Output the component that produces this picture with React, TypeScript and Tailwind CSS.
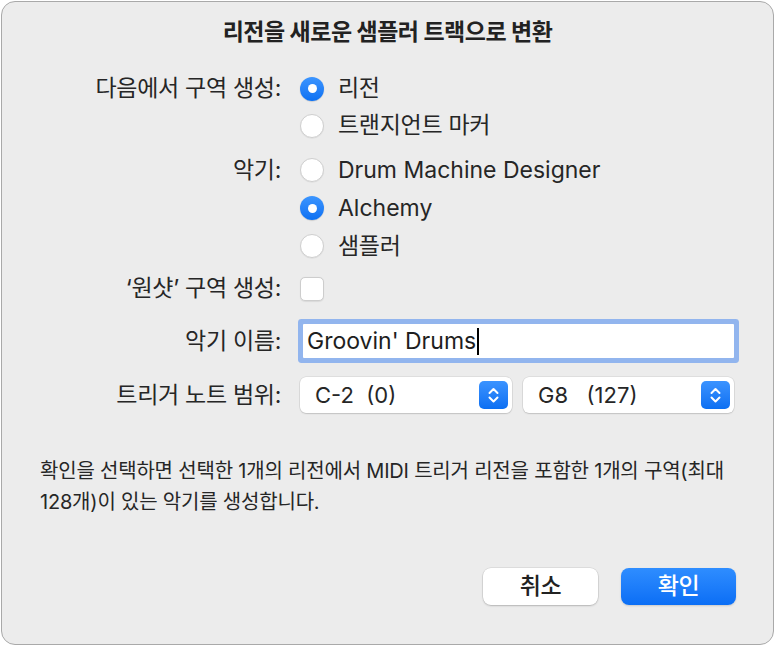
import React from "react";

const Radio = ({ on }: { on?: boolean }) =>
  on ? (
    <span className="flex h-6 w-6 shrink-0 items-center justify-center rounded-full bg-linear-to-b from-[#3b95ff] to-[#0a70f2] shadow-[0_0.5px_1px_rgba(0,0,0,0.25)]">
      <span className="h-[9px] w-[9px] rounded-full bg-white" />
    </span>
  ) : (
    <span className="h-6 w-6 shrink-0 rounded-full border border-[#cfcfcf] bg-white shadow-[0_0.5px_1px_rgba(0,0,0,0.08)]" />
  );

const Row = ({
  label,
  className = "h-[37px]",
  children,
}: {
  label?: string;
  className?: string;
  children: React.ReactNode;
}) => (
  <div className={`flex items-center ${className}`}>
    <div className="w-[279px] text-right text-[23px] tracking-[-0.3px] text-[#262626]">
      {label}
    </div>
    <div className="ml-[19px] flex flex-1 items-center">{children}</div>
  </div>
);

const Option = ({ on, children, latin }: { on?: boolean; children: React.ReactNode; latin?: boolean }) => (
  <div className="flex items-center gap-[14px]">
    <Radio on={on} />
    <span
      className={
        latin
          ? "text-[23px] text-[#262626]"
          : "text-[23px] tracking-[-0.3px] text-[#262626]"
      }
    >
      {children}
    </span>
  </div>
);

const Stepper = () => (
  <span className="flex h-[28px] w-[29px] items-center justify-center rounded-[5px] bg-linear-to-b from-[#3a93ff] to-[#0a6ff2]">
    <svg width="29" height="28" viewBox="0 0 29 28" fill="none">
      <path d="M10.5 12 L14.5 8 L18.5 12" stroke="white" strokeWidth="2" strokeLinecap="round" strokeLinejoin="round" />
      <path d="M10.5 16.5 L14.5 20.5 L18.5 16.5" stroke="white" strokeWidth="2" strokeLinecap="round" strokeLinejoin="round" />
    </svg>
  </span>
);

const Popup = ({ value, className }: { value: string; className: string }) => (
  <div
    className={`flex h-[36px] items-center justify-between rounded-[6px] bg-white pl-[15px] pr-[4px] shadow-[0_0_0_0.5px_rgba(0,0,0,0.12),0_1px_1.5px_rgba(0,0,0,0.12)] ${className}`}
  >
    <span className="whitespace-pre text-[22px] text-[#262626]">{value}</span>
    <Stepper />
  </div>
);

export default function App() {
  return (
    <div className="h-[646px] w-[779px] bg-white p-[1px] font-['Inter','Noto_Sans_CJK_KR',sans-serif]">
      <div className="flex h-[644px] w-[773px] flex-col rounded-[14px] border border-[#a9a9a9] bg-[#ececec]">
        <h1 className="pt-[15px] text-center text-[23px] leading-[30px] font-bold tracking-[-0.5px] text-[#222]">
          리전을 새로운 샘플러 트랙으로 변환
        </h1>

        <div className="mt-[23px] flex flex-col">
          <Row label="다음에서 구역 생성:">
            <Option on>리전</Option>
          </Row>
          <Row>
            <Option>트랜지언트 마커</Option>
          </Row>

          <Row label="악기:" className="mt-[7px] h-[38px]">
            <Option latin>Drum Machine Designer</Option>
          </Row>
          <Row className="h-[38px]">
            <Option on latin>
              Alchemy
            </Option>
          </Row>
          <Row className="h-[38px]">
            <Option>샘플러</Option>
          </Row>

          <Row label="‘원샷’ 구역 생성:" className="mt-[5px] h-[37px]">
            <span className="h-6 w-6 rounded-[5px] border border-[#cdcdcd] bg-white shadow-[0_0.5px_1px_rgba(0,0,0,0.08)]" />
          </Row>

          <Row label="악기 이름:" className="mt-[11px] h-[46px]">
            <div className="ml-[3px] flex h-[34px] w-[431px] items-center rounded-[1px] bg-white pl-[4px] shadow-[0_0_0_5px_#92b5ee]">
              <span className="text-[23px] text-[#1e1e1e]">Groovin' Drums</span>
              <span className="ml-[1px] h-[27px] w-[2px] bg-black" />
            </div>
          </Row>

          <Row label="트리거 노트 범위:" className="mt-[13px] h-[36px]">
            <Popup value="C-2  (0)" className="w-[212px]" />
            <Popup value="G8   (127)" className="ml-[11px] w-[211px]" />
          </Row>
        </div>

        <p className="mt-[43px] pl-[38px] text-[20px] leading-[31px] tracking-[-0.2px] text-[#262626]">
          확인을 선택하면 선택한 1개의 리전에서 MIDI 트리거 리전을 포함한 1개의 구역(최대
          <br />
          128개)이 있는 악기를 생성합니다.
        </p>

        <div className="mt-[50px] flex justify-end gap-[23px] pr-[37px]">
          <button className="h-[37px] w-[115px] rounded-[8px] bg-white text-[23px] font-medium tracking-[-0.5px] text-[#222] shadow-[0_0_0_0.5px_rgba(0,0,0,0.12),0_1px_2px_rgba(0,0,0,0.18)]">
            취소
          </button>
          <button className="h-[37px] w-[115px] rounded-[8px] bg-linear-to-b from-[#2e8dff] to-[#0a6ef5] text-[23px] font-medium tracking-[-0.5px] text-white shadow-[0_1px_2px_rgba(0,0,0,0.15)]">
            확인
          </button>
        </div>
      </div>
    </div>
  );
}
